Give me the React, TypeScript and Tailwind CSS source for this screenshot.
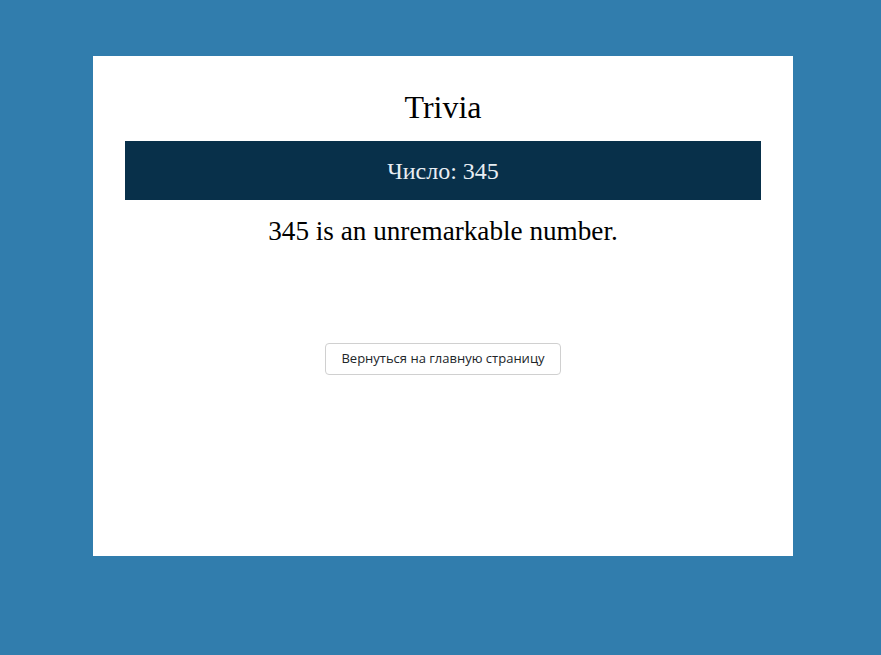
export default function App() {
  return (
    <div className="min-h-screen w-full bg-[#317dad] pl-[93px] pt-[56px] font-['Liberation_Serif',serif]">
      <div className="flex h-[500px] w-[700px] flex-col items-center bg-white px-8 pt-[33px]">
        <h1 className="text-[32px] leading-[36px] text-black">Trivia</h1>
        <div className="mt-4 flex h-[59px] w-full items-center justify-center bg-[#08304a]">
          <h2 className="text-[24px] leading-[28px] text-[#e8eef3]">Число: 345</h2>
        </div>
        <p className="mt-4 text-[27.2px] leading-[31px] text-black">345 is an unremarkable number.</p>
        <button className="mt-[96px] h-[32px] rounded-[4px] border border-[#d0d0d0] bg-white px-[15px] font-['Open_Sans',sans-serif] text-[13px] text-[#212529]">
          Вернуться на главную страницу
        </button>
      </div>
    </div>
  );
}
